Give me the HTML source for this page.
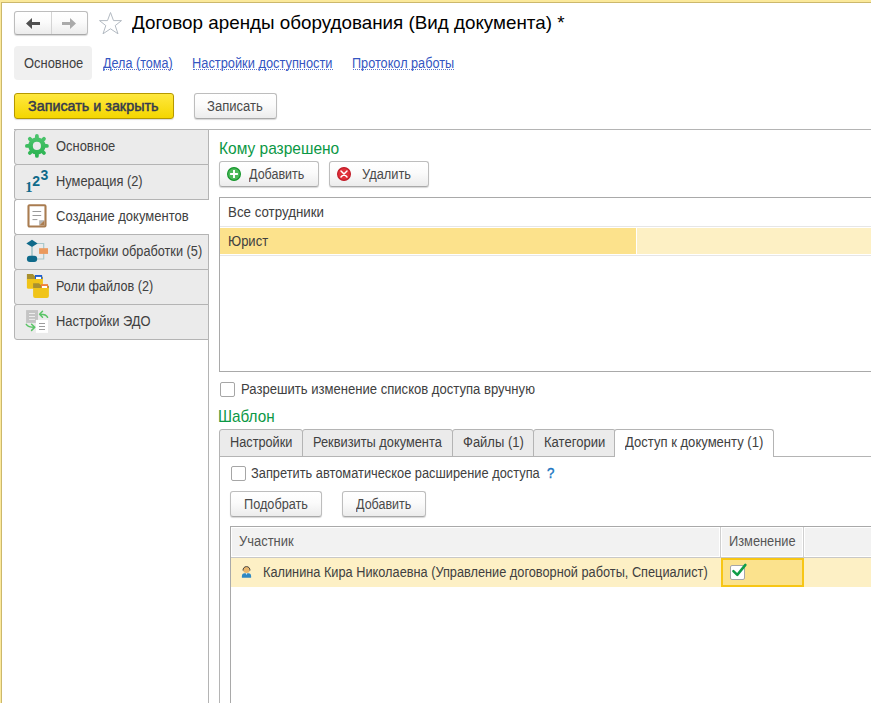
<!DOCTYPE html>
<html><head><meta charset="utf-8">
<style>
*{box-sizing:border-box;margin:0;padding:0}
html,body{width:871px;height:703px;overflow:hidden;background:#fff}
body{position:relative;font-family:"Liberation Sans",sans-serif;color:#333}
.a{position:absolute}
.t{position:absolute;white-space:nowrap;font-size:14px;line-height:14px;transform-origin:0 0;color:#404040}
.btn{position:absolute;border:1px solid #bdbdbd;border-bottom-color:#a9a9a9;border-radius:3px;background:linear-gradient(#ffffff 0%,#fbfbfb 45%,#ececec 100%);box-shadow:0 1px 1px rgba(0,0,0,0.16)}
.bt{color:#4a4a4a}
.ltab{position:absolute;left:14px;width:195px;height:36px;border:1px solid #b4b4b4;border-radius:3px 0 0 3px;background:#ebebeb}
.ico{position:absolute;left:10px;top:4px;width:24px;height:24px;overflow:visible}
.tab{position:absolute;top:429px;height:28px;border:1px solid #b4b4b4;border-radius:3px 3px 0 0;background:#ebebeb}
.cb{position:absolute;width:15px;height:15px;border:1px solid #a6a6a6;border-radius:2px;background:#fff}
.lnk{color:#3556c2}
.ul{position:absolute;height:1px;border-top:1px dotted #5a74cc}
.green{color:#0b9845;font-size:17px;line-height:17px}
</style></head><body>
<!-- window yellow border -->
<div class="a" style="left:0;top:0;width:871px;height:2px;background:#fbe99b"></div>
<div class="a" style="left:1px;top:2px;width:870px;height:1px;background:#ccb86c"></div>
<div class="a" style="left:0;top:0;width:1px;height:703px;background:#fbe99b"></div>
<div class="a" style="left:1px;top:2px;width:1px;height:701px;background:#ccb86c"></div>

<!-- nav buttons -->
<div class="btn" style="left:14px;top:11px;width:74px;height:24px"></div>
<div class="a" style="left:51px;top:12px;width:1px;height:22px;background:#d4d4d4"></div>
<svg class="a" style="left:26px;top:18px" width="15" height="12" viewBox="0 0 15 12"><path d="M0 5.5 L6 0 L6 4 L14 4 L14 7 L6 7 L6 11 Z" fill="#505050"/></svg>
<svg class="a" style="left:62px;top:18px" width="15" height="12" viewBox="0 0 15 12"><path d="M14 5.5 L8 0 L8 4 L0 4 L0 7 L8 7 L8 11 Z" fill="#aaa"/></svg>
<!-- star -->
<svg class="a" style="left:98px;top:11px" width="25" height="24" viewBox="0 0 25 24"><path d="M12.5 1.5 L15.5 9.6 L23.5 9.6 L17.2 14.6 L20 22.8 L12.5 17.8 L5 22.8 L7.8 14.6 L1.5 9.6 L9.5 9.6 Z" fill="none" stroke="#b3bac2" stroke-width="1"/></svg>
<div class="t" style="left:132px;top:13px;font-size:19px;line-height:19px;color:#000;transform:scaleX(0.99)">Договор аренды оборудования (Вид документа) *</div>

<!-- top nav -->
<div class="a" style="left:14px;top:46px;width:78px;height:34px;background:#f0f0f0;border-radius:4px"></div>
<div class="t" style="left:23.5px;top:56px;transform:scaleX(0.924)">Основное</div>
<div class="t lnk" style="left:103px;top:56px;transform:scaleX(0.899)">Дела (тома)</div>
<div class="ul" style="left:103px;top:69px;width:70px"></div>
<div class="t lnk" style="left:192px;top:56px;transform:scaleX(0.916)">Настройки доступности</div>
<div class="ul" style="left:193px;top:69px;width:140px"></div>
<div class="t lnk" style="left:352px;top:56px;transform:scaleX(0.906)">Протокол работы</div>
<div class="ul" style="left:353px;top:69px;width:101px"></div>

<!-- command bar -->
<div class="a" style="left:14px;top:93px;width:160px;height:26px;border:1px solid #b59800;border-radius:3px;background:linear-gradient(#ffe83f,#f4d600);box-shadow:0 1px 1px rgba(0,0,0,0.15)"></div>
<div class="t" style="left:28px;top:99px;color:#343a4e;-webkit-text-stroke:0.45px #343a4e;transform:scaleX(1.025)">Записать и закрыть</div>
<div class="btn" style="left:194px;top:93px;width:83px;height:26px"></div>
<div class="t bt" style="left:207.4px;top:99px;transform:scaleX(0.933)">Записать</div>

<!-- main frame lines -->
<div class="a" style="left:14px;top:129px;width:857px;height:1px;background:#b4b4b4"></div>
<div class="a" style="left:208px;top:129px;width:1px;height:574px;background:#b4b4b4"></div>

<!-- left tabs -->
<div class="ltab" style="top:129px"><svg class="ico" viewBox="0 0 24 24"><defs><linearGradient id="gg" x1="0" y1="0" x2="0" y2="1"><stop offset="0" stop-color="#4cc46c"/><stop offset="1" stop-color="#2cb452"/></linearGradient></defs><g stroke="url(#gg)" stroke-width="3.8" stroke-linecap="round"><path d="M11.9 11.9V1.9M11.9 11.9V21.9M11.9 11.9H1.9M11.9 11.9H21.9M11.9 11.9L4.83 4.83M11.9 11.9L18.97 18.97M11.9 11.9L18.97 4.83M11.9 11.9L4.83 18.97"/></g><circle cx="11.9" cy="11.9" r="8.6" fill="url(#gg)"/><circle cx="11.9" cy="11.9" r="4.05" fill="#ebebeb"/></svg></div>
<div class="ltab" style="top:164px"><svg class="ico" viewBox="0 0 24 24"><g fill="#0f6a8a" font-weight="bold"><text x="0.2" y="23" font-size="14.5" font-family="Liberation Serif">1</text><text x="7.3" y="17" font-size="14" font-family="Liberation Sans">2</text><text x="15.6" y="11.1" font-size="14" font-family="Liberation Sans">3</text></g></svg></div>
<div class="ltab" style="top:199px;background:#fff;border-right:none;width:195px"><svg class="ico" viewBox="0 0 24 24"><rect x="3.5" y="1.2" width="17" height="21.3" rx="1" fill="#fff" stroke="#a97c50" stroke-width="2.1"/><path d="M7.5 7.5h8.7M7.5 11.5h8.7M7.5 15.6h4.9" stroke="#9a9a9a" stroke-width="1"/><path d="M14.1 16.2 L19.45 16.2 L14.1 21.45Z" fill="#b4b4b4"/><path d="M19.45 16.2 L19.45 21.45 L14.1 21.45Z" fill="#a97c50"/></svg></div>
<div class="ltab" style="top:234px"><svg class="ico" viewBox="0 0 24 24"><path d="M12 4.5 H18.7 V20 H12" fill="none" stroke="#a8c8cc" stroke-width="1.2"/><path d="M7 8 V17" stroke="#a8c8cc" stroke-width="1.7"/><path d="M1.3 4.5 L7 0.8 L12.6 4.5 L7 8.1Z" fill="#0f6a8a"/><rect x="1.9" y="16.8" width="10.3" height="6.2" rx="3" fill="#0f6a8a"/><rect x="14.1" y="9.2" width="8.9" height="5.7" fill="#eb9a5e"/></svg></div>
<div class="ltab" style="top:269px"><svg class="ico" viewBox="0 0 24 24"><path d="M1.9 0 H7.9 L10.5 2.8 H17.9 V5.5 H1.9Z" fill="#a89030"/><rect x="10" y="1" width="7.1" height="4.5" fill="#1e5ecf"/><rect x="11" y="2.9" width="5.1" height="2.6" fill="#fff"/><path d="M1.9 4.9 H17.9 V13.2 Q17.9 14.7 16.4 14.7 H3.4 Q1.9 14.7 1.9 13.2Z" fill="#f0c419"/><path d="M8.1 9.2 H14 L16.5 11.8 H23.9 V14.5 H8.1Z" fill="#a89030"/><rect x="16" y="10.1" width="7" height="4.2" fill="#f0803a"/><rect x="17" y="12" width="5" height="2.3" fill="#fff"/><path d="M8.1 13.9 H23.9 V21.9 Q23.9 23.9 21.9 23.9 H10.1 Q8.1 23.9 8.1 21.9Z" fill="#f0c419"/></svg></div>
<div class="ltab" style="top:304px"><svg class="ico" viewBox="0 0 24 24"><rect x="1.1" y="1.1" width="11.9" height="12.8" fill="#c4c4c4"/><path d="M4 4.5h6M4 7.5h6M4 10.4h6" stroke="#ececec" stroke-width="1"/><rect x="10.9" y="10.9" width="12.1" height="13" fill="#fff"/><path d="M14 14.5h6M14 17.5h6M14 20.5h6" stroke="#9c9c9c" stroke-width="1"/><g fill="none" stroke="#5ac466" stroke-width="1.5" stroke-linecap="round" stroke-linejoin="round"><path d="M22.6 8.3 C21.2 5.6 18.5 5.1 14.6 5.3 M17.5 2.3 L14.6 5.3 L17.5 8.3"/><path d="M1.3 15.4 C3 17.9 6 18.4 9.8 18.3 M6.6 15.3 L9.8 18.3 L6.6 21.4"/></g></svg></div>
<div class="t" style="left:55.5px;top:139px;transform:scaleX(0.924)">Основное</div>
<div class="t" style="left:55.5px;top:174px;transform:scaleX(0.918)">Нумерация (2)</div>
<div class="t" style="left:55.5px;top:209px;transform:scaleX(0.929)">Создание документов</div>
<div class="t" style="left:55.5px;top:244px;transform:scaleX(0.909)">Настройки обработки (5)</div>
<div class="t" style="left:55.5px;top:279px;transform:scaleX(0.902)">Роли файлов (2)</div>
<div class="t" style="left:55.5px;top:314px;transform:scaleX(0.923)">Настройки ЭДО</div>

<!-- Кому разрешено -->
<div class="t green" style="left:218.7px;top:140px;transform:scaleX(0.912)">Кому разрешено</div>
<div class="btn" style="left:219px;top:161px;width:100px;height:26px"></div>
<svg class="a" style="left:226px;top:166px" width="16" height="16" viewBox="0 0 16 16"><circle cx="8" cy="8" r="6.4" fill="#4cb95a" stroke="#16962c" stroke-width="1.2"/><path d="M8 4.1v7.8M4.1 8h7.8" stroke="#fff" stroke-width="1.9"/></svg>
<div class="t bt" style="left:249px;top:167px;transform:scaleX(0.895)">Добавить</div>
<div class="btn" style="left:329px;top:161px;width:100px;height:26px"></div>
<svg class="a" style="left:336px;top:166px" width="16" height="16" viewBox="0 0 16 16"><circle cx="8" cy="8" r="6.4" fill="#e0303a" stroke="#c01c28" stroke-width="1.2"/><path d="M5 5l6 6M11 5l-6 6" stroke="#fff" stroke-width="1.5" stroke-linecap="round"/></svg>
<div class="t bt" style="left:362px;top:167px;transform:scaleX(0.917)">Удалить</div>

<div class="a" style="left:219px;top:197px;width:660px;height:175px;border:1px solid #a9a9a9;background:#fff"></div>
<div class="t" style="left:228px;top:205px;transform:scaleX(0.951)">Все сотрудники</div>
<div class="a" style="left:220px;top:226px;width:651px;height:1px;background:#e6e6e6"></div>
<div class="a" style="left:220px;top:228px;width:416px;height:26px;background:#fce28c"></div>
<div class="a" style="left:637px;top:228px;width:234px;height:26px;background:#fdf0c4"></div>
<div class="a" style="left:220px;top:255px;width:651px;height:1px;background:#e6e6e6"></div>
<div class="t" style="left:228px;top:234px;transform:scaleX(0.929)">Юрист</div>

<div class="cb" style="left:220px;top:382px"></div>
<div class="t" style="left:240.6px;top:382px;transform:scaleX(0.934)">Разрешить изменение списков доступа вручную</div>

<!-- Шаблон -->
<div class="t green" style="left:218.4px;top:408px;transform:scaleX(0.9)">Шаблон</div>
<div class="tab" style="left:219px;width:84px"></div>
<div class="tab" style="left:302px;width:151px"></div>
<div class="tab" style="left:452px;width:82px"></div>
<div class="tab" style="left:533px;width:83px"></div>
<div class="a" style="left:219px;top:456px;width:652px;height:1px;background:#b4b4b4"></div>
<div class="a" style="left:219px;top:456px;width:1px;height:247px;background:#b4b4b4"></div>
<div class="tab" style="left:614px;width:160px;height:28px;background:#fff;border-bottom:none"></div>
<div class="t" style="left:230.2px;top:435px;transform:scaleX(0.909)">Настройки</div>
<div class="t" style="left:313.2px;top:435px;transform:scaleX(0.915)">Реквизиты документа</div>
<div class="t" style="left:463.4px;top:435px;transform:scaleX(0.928)">Файлы (1)</div>
<div class="t" style="left:543.8px;top:435px;transform:scaleX(0.934)">Категории</div>
<div class="t" style="left:624.8px;top:435px;transform:scaleX(0.933)">Доступ к документу (1)</div>

<div class="cb" style="left:231px;top:466px"></div>
<div class="t" style="left:251.4px;top:466px;transform:scaleX(0.916)">Запретить автоматическое расширение доступа</div>
<div class="t" style="left:546.8px;top:466px;color:#1a76c2;-webkit-text-stroke:0.4px #1a76c2;transform:scaleX(0.95)">?</div>

<div class="btn" style="left:230px;top:491px;width:92px;height:26px"></div>
<div class="t bt" style="left:243.5px;top:497px;transform:scaleX(0.907)">Подобрать</div>
<div class="btn" style="left:342px;top:491px;width:84px;height:26px"></div>
<div class="t bt" style="left:355.7px;top:497px;transform:scaleX(0.895)">Добавить</div>

<!-- table 2 -->
<div class="a" style="left:230px;top:526px;width:660px;height:200px;border:1px solid #a9a9a9;background:#fff"></div>
<div class="a" style="left:232px;top:528px;width:639px;height:28px;background:#f2f2f2"></div>
<div class="a" style="left:231px;top:557px;width:640px;height:1px;background:#c8c8c8"></div>
<div class="a" style="left:719px;top:527px;width:3px;height:30px;background:#fff"></div>
<div class="a" style="left:720px;top:527px;width:1px;height:30px;background:#cfcfcf"></div>
<div class="a" style="left:802px;top:527px;width:3px;height:30px;background:#fff"></div>
<div class="a" style="left:803px;top:527px;width:1px;height:30px;background:#cfcfcf"></div>
<div class="t" style="left:239px;top:534px;color:#555;transform:scaleX(0.926)">Участник</div>
<div class="t" style="left:728.6px;top:534px;color:#555;transform:scaleX(0.915)">Изменение</div>
<div class="a" style="left:231px;top:558px;width:640px;height:29px;background:#fdf0c5"></div>
<div class="a" style="left:721px;top:558px;width:83px;height:29px;background:#fbe28d;border:2px solid #f7c615"></div>
<svg class="a" style="left:241px;top:565px" width="12" height="14" viewBox="0 0 12 14"><circle cx="5.5" cy="4.7" r="3.3" fill="#e9b66c"/><path d="M2.1 5.6 A3.45 3.45 0 1 1 8.9 5.6" fill="none" stroke="#3b3b3b" stroke-width="0.9"/><path d="M0.9 12.8 V11.2 Q0.9 8.4 3.6 8.3 H7.4 Q10.1 8.4 10.1 11.2 V12.8Z" fill="#2e88c4"/><path d="M4.7 8.3 L5.5 9.9 L6.3 8.3Z" fill="#fff"/></svg>
<div class="t" style="left:262.7px;top:565px;transform:scaleX(0.911)">Калинина Кира Николаевна (Управление договорной работы, Специалист)</div>
<div class="cb" style="left:730px;top:565px"></div>
<svg class="a" style="left:731px;top:561px" width="18" height="18" viewBox="0 0 18 18"><path d="M2.4 10.1 L6.3 13.9 L14.4 3.9" fill="none" stroke="#0f9c48" stroke-width="2.5" stroke-linecap="round" stroke-linejoin="round"/></svg>
</body></html>
